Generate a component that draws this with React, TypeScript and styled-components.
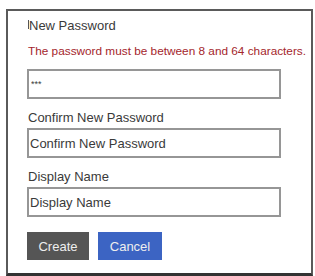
import React from "react";
import styled, { createGlobalStyle } from "styled-components";

const GlobalStyle = createGlobalStyle`
  html, body {
    margin: 0;
    padding: 0;
    background: #ffffff;
  }
  body {
    font-family: "Liberation Sans", Arial, sans-serif;
  }
`;

const Page = styled.div`
  padding: 9px 0 0 6px;
`;

const Card = styled.form`
  width: 307px;
  box-sizing: border-box;
  border: 2px solid #5a5a5a;
  border-bottom: 3px solid #333333;
  background: #ffffff;
  padding: 7px 0 13px 19px;
  display: flex;
  flex-direction: column;
  align-items: flex-start;
`;

const Label = styled.label<{ $first?: boolean }>`
  font-size: 13px;
  line-height: 15px;
  color: #3a3a3a;
  margin-top: ${(p) => (p.$first ? "0" : "11px")};
  margin-bottom: 3px;
  padding-left: 1px;
`;

const Caret = styled.span`
  display: inline-block;
  width: 1px;
  height: 9px;
  background: #555555;
  vertical-align: 1px;
`;

const ErrorText = styled.div`
  font-size: 11.8px;
  line-height: 14px;
  color: #a4262c;
  margin: 8px 0 11px 1px;
  white-space: nowrap;
`;

const Input = styled.input`
  box-sizing: border-box;
  width: 254px;
  height: 30px;
  border: 2px solid #969696;
  padding: 0 1px;
  font-family: "Liberation Sans", Arial, sans-serif;
  font-size: 13px;
  color: #3a3a3a;
  background: #ffffff;
  outline: none;
`;

const SmallInput = styled(Input)`
  font-size: 9px;
  padding-left: 2px;
`;

const Buttons = styled.div`
  display: flex;
  gap: 9px;
  margin-top: 15px;
`;

const Button = styled.button<{ $variant: "create" | "cancel" }>`
  height: 28px;
  width: ${(p) => (p.$variant === "create" ? "62px" : "64px")};
  border: none;
  padding: 0;
  font-family: "Liberation Sans", Arial, sans-serif;
  font-size: 13px;
  color: #eeeeee;
  background: ${(p) => (p.$variant === "create" ? "#555555" : "#3c64c3")};
  cursor: pointer;
`;

export default function App() {
  return (
    <Page>
      <GlobalStyle />
      <Card onSubmit={(e) => e.preventDefault()}>
        <Label $first>
          <Caret />
          New Password
        </Label>
        <ErrorText>The password must be between 8 and 64 characters.</ErrorText>
        <SmallInput type="text" defaultValue="***" />
        <Label>Confirm New Password</Label>
        <Input type="text" defaultValue="Confirm New Password" />
        <Label>Display Name</Label>
        <Input type="text" defaultValue="Display Name" />
        <Buttons>
          <Button type="submit" $variant="create">
            Create
          </Button>
          <Button type="button" $variant="cancel">
            Cancel
          </Button>
        </Buttons>
      </Card>
    </Page>
  );
}
